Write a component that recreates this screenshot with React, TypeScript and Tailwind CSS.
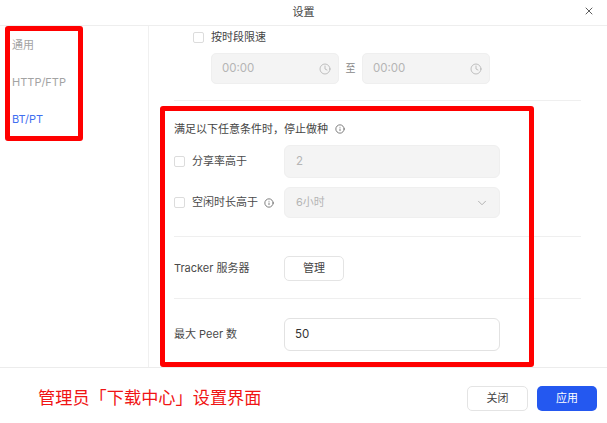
import { ChevronDown, Clock, Info, X } from "lucide-react";
import { clsx } from "clsx";

function Checkbox() {
  return <span className="h-[11px] w-[11px] shrink-0 rounded-[2px] border border-[#dcdcdc] bg-white" />;
}

function TimeInput() {
  return (
    <div className="flex h-[31px] w-[128px] items-center justify-between rounded-[5px] border border-[#efefef] bg-[#f4f4f4] pl-[10px] pr-[7px] text-[11.5px] text-[#b5b5b5]">
      <span>00:00</span>
      <Clock className="h-[12px] w-[12px] text-[#a8a8a8]" strokeWidth={1.4} />
    </div>
  );
}

export default function App() {
  const nav = [
    { label: "通用", active: false },
    { label: "HTTP/FTP", active: false },
    { label: "BT/PT", active: true },
  ];

  return (
    <div className="relative flex h-[423px] w-[607px] flex-col overflow-hidden bg-white font-['Inter','Noto_Sans_CJK_SC',sans-serif] text-[#4a4a4a]">
      <header className="relative flex h-[26px] shrink-0 items-center justify-center border-b border-[#eeeeee] text-[11px] text-[#444444]">
        设置
        <X className="absolute right-[12px] top-[5px] h-[12px] w-[12px] text-[#333333]" strokeWidth={1.6} />
      </header>

      <div className="flex h-[342px] shrink-0 border-b border-[#ececec]">
        <aside className="flex w-[149px] shrink-0 flex-col gap-[22px] border-r border-[#f0f0f0] pl-[12px] pt-[12px] text-[11px] leading-[15px] text-[#a3a3a3]">
          {nav.map((item) => (
            <div key={item.label} className={clsx(item.active && "text-[#3f6ff0]")}>
              {item.label}
            </div>
          ))}
        </aside>

        <main className="flex flex-1 flex-col pl-[25px] pr-[26px] text-[11px]">
          <div className="flex h-[75px] shrink-0 flex-col border-b border-[#efefef] pl-[19px] pt-[6px]">
            <label className="flex h-[11px] items-center gap-[7px] text-[#444444]">
              <Checkbox />
              按时段限速
            </label>
            <div className="ml-[18px] mt-[10px] flex items-center">
              <TimeInput />
              <span className="w-[23px] text-center text-[10px] text-[#888888]">至</span>
              <TimeInput />
            </div>
          </div>

          <div className="flex h-[136px] shrink-0 flex-col border-b border-[#efefef] pt-[21px]">
            <div className="flex h-[14px] items-center text-[#444444]">
              满足以下任意条件时，停止做种
              <Info className="ml-[7px] h-[10px] w-[10px] text-[#555555]" strokeWidth={1.8} />
            </div>
            <div className="mt-[9px] flex h-[33px] items-center">
              <label className="flex w-[110px] items-center gap-[7px]">
                <Checkbox />
                分享率高于
              </label>
              <div className="flex h-[33px] w-[216px] items-center rounded-[6px] border border-[#efefef] bg-[#f4f4f4] pl-[11px] text-[11.5px] text-[#b5b5b5]">
                2
              </div>
            </div>
            <div className="mt-[9px] flex h-[31px] items-center">
              <label className="flex w-[110px] items-center gap-[7px]">
                <Checkbox />
                空闲时长高于
                <Info className="-ml-[1px] h-[10px] w-[10px] text-[#555555]" strokeWidth={1.8} />
              </label>
              <div className="flex h-[31px] w-[216px] items-center justify-between rounded-[6px] border border-[#efefef] bg-[#f4f4f4] pl-[11px] pr-[10px] text-[11px] text-[#b5b5b5]">
                6小时
                <ChevronDown className="h-[14px] w-[14px] text-[#a8a8a8]" strokeWidth={1.5} />
              </div>
            </div>
          </div>

          <div className="flex h-[62px] shrink-0 items-center border-b border-[#efefef] pt-[2px]">
            <span className="w-[110px]">Tracker 服务器</span>
            <button className="flex h-[25px] w-[60px] items-center justify-center rounded-[5px] border border-[#e4e4e4] bg-white text-[#444444]">
              管理
            </button>
          </div>

          <div className="flex flex-1 items-start pt-[19px]">
            <span className="flex h-[33px] w-[110px] items-center">最大 Peer 数</span>
            <div className="flex h-[33px] w-[216px] items-center rounded-[6px] border border-[#e2e2e2] bg-white pl-[10px] text-[11.5px] text-[#333333]">
              50
            </div>
          </div>
        </main>
      </div>

      <footer className="flex flex-1 items-center justify-between pl-[38px] pr-[10px] pt-[5px]">
        <span className="text-[17.2px] leading-[24px] text-[#f01414]">管理员「下载中心」设置界面</span>
        <div className="flex gap-[9px] text-[11px]">
          <button className="flex h-[25px] w-[61px] items-center justify-center rounded-[5px] border border-[#e4e4e4] bg-white text-[#444444]">
            关闭
          </button>
          <button className="flex h-[25px] w-[60px] items-center justify-center rounded-[5px] bg-[#2458f0] text-white">
            应用
          </button>
        </div>
      </footer>

      <div className="absolute left-[5px] top-[26px] h-[115px] w-[78px] rounded-[3px] border-[5px] border-[#ff0000]" />
      <div className="absolute left-[160px] top-[106px] h-[261px] w-[374px] rounded-[3px] border-[5px] border-[#ff0000]" />
    </div>
  );
}
